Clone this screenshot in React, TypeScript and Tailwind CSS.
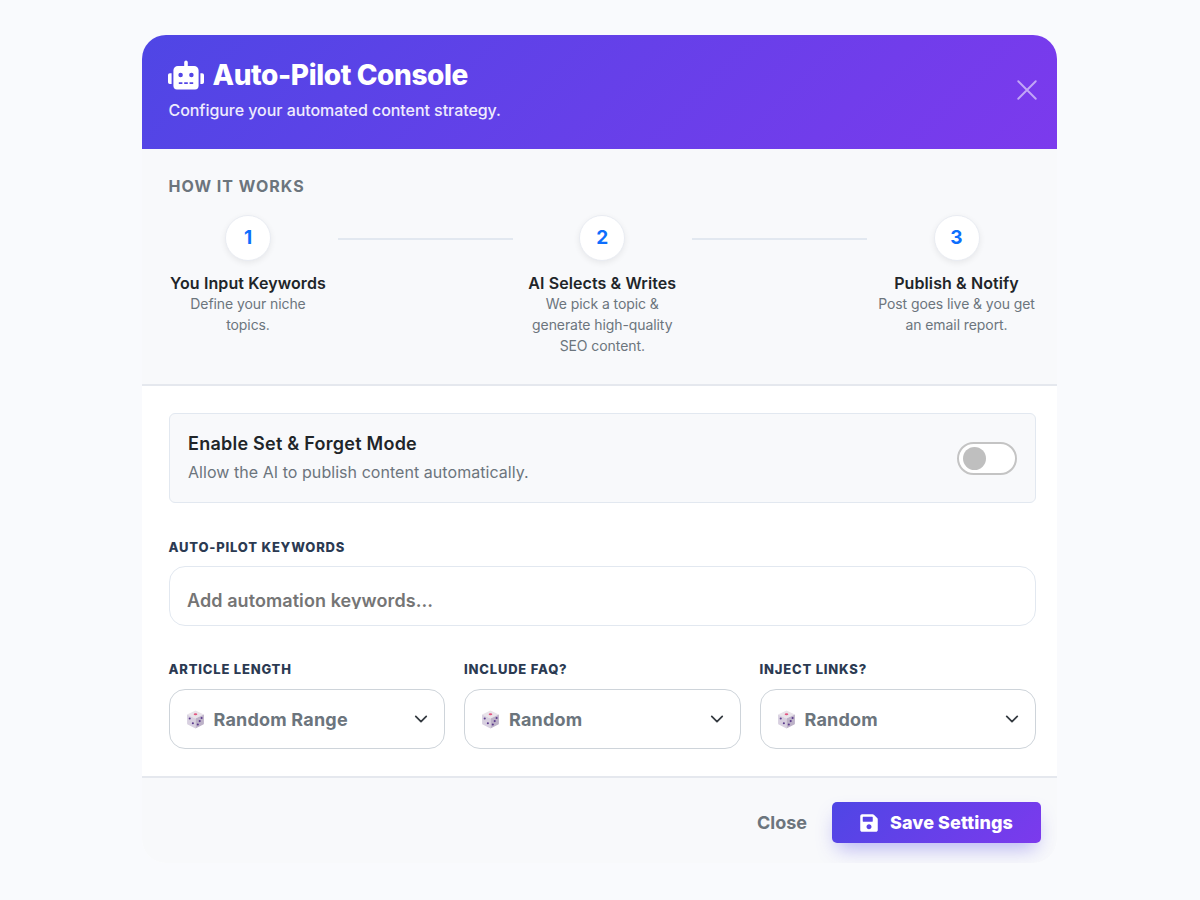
import { FaRobot, FaSave } from 'react-icons/fa';

const steps = [
  { n: '1', title: 'You Input Keywords', lines: ['Define your niche', 'topics.'] },
  { n: '2', title: 'AI Selects & Writes', lines: ['We pick a topic &', 'generate high-quality', 'SEO content.'] },
  { n: '3', title: 'Publish & Notify', lines: ['Post goes live & you get', 'an email report.'] },
];

const selects = [
  { label: 'ARTICLE LENGTH', value: 'Random Range' },
  { label: 'INCLUDE FAQ?', value: 'Random' },
  { label: 'INJECT LINKS?', value: 'Random' },
];

const Dice = () => (
  <svg width="21" height="21" viewBox="0 0 20 20" className="shrink-0">
    <path d="M10 1.5 18 5.2 10 9 2 5.2Z" fill="#e9e4ea" />
    <path d="M2 5.2 10 9v9.5L2.6 14.8Q2 14.500 2 13.800Z" fill="#d8d0e0" />
    <path d="M18 5.2 10 9v9.5l7.400-3.700q.6-.3.6-1Z" fill="#bdb2c8" />
    <ellipse cx="10" cy="5" rx="1.700" ry="1" fill="#e2557f" />
    <circle cx="4.500" cy="9" r="1" fill="#5b3a8c" />
    <circle cx="7.500" cy="13.500" r="1" fill="#5b3a8c" />
    <circle cx="15.800" cy="8.500" r="1" fill="#5b3a8c" />
    <circle cx="14" cy="11.500" r="1" fill="#5b3a8c" />
    <circle cx="12.200" cy="14.800" r="1" fill="#5b3a8c" />
  </svg>
);

const Chevron = () => (
  <svg width="14" height="14" viewBox="0 0 16 16" fill="none" stroke="#343a40" strokeWidth="2" strokeLinecap="round" strokeLinejoin="round" className="shrink-0">
    <path d="m2 5 6 6 6-6" />
  </svg>
);

const App = () => {
  return (
    <div className="min-h-[900px] bg-[#f9fafd] pt-[35px] font-['Inter',sans-serif]">
      <div className="ml-[142px] w-[915px] overflow-hidden rounded-[24px] bg-white">
        <div className="flex h-[114px] items-center justify-between bg-[linear-gradient(135deg,#4f46e5,#7c3aed)] pr-[20px] pl-[26.5px]">
          <div className="-mt-[5px]">
            <h1 className="flex items-center gap-[9px] text-[28px] leading-[34px] font-extrabold tracking-[-0.4px] text-white">
              <FaRobot size={36} className="-ml-px w-[36px]" />
              Auto-Pilot Console
            </h1>
            <p className="mt-[5px] text-[16px] leading-[24px] font-medium tracking-[-0.05px] text-white/90">Configure your automated content strategy.</p>
          </div>
          <svg width="20" height="20" viewBox="0 0 16 16" fill="none" stroke="#ffffff" strokeOpacity="0.55" strokeWidth="1.500" strokeLinecap="round" className="-mt-[4px]">
            <path d="M1 1l14 14M15 1 1 15" />
          </svg>
        </div>

        <div className="h-[237px] border-b-2 border-[#e5e8ee] bg-[#f8f9fb] pt-[27px] pr-[21px] pl-[26.5px]">
          <h2 className="text-[16px] leading-[20px] font-bold tracking-[1px] text-[#6c757d]">HOW IT WORKS</h2>
          <div className="mt-[19px] flex items-start justify-between">
            {steps.map((s, i) => (
              <div key={s.n} className="contents">
                {i > 0 && <div className="mt-[23px] h-[2px] w-[175px] bg-[#e2e8f0]" />}
                <div className="flex w-[159px] flex-col items-center text-center">
                  <div className="flex h-[46px] w-[46px] items-center justify-center rounded-full border border-[#e9ecf2] bg-white text-[19px] font-bold text-[#0d6efd] shadow-[0_2px_6px_rgba(0,0,0,0.07)]">
                    {s.n}
                  </div>
                  <div className="mt-[10px] text-[16px] leading-[24px] font-semibold tracking-[0.1px] whitespace-nowrap text-[#212529]">{s.title}</div>
                  <div className="-mt-[2px] text-[14px] leading-[21px] tracking-[-0.08px] whitespace-nowrap text-[#6c757d]">
                    {s.lines.map((l) => (
                      <div key={l}>{l}</div>
                    ))}
                  </div>
                </div>
              </div>
            ))}
          </div>
        </div>

        <div className="h-[392px] border-b-2 border-[#e5e8ee] pt-[27px] pr-[21px] pl-[26.5px]">
          <div className="flex h-[90px] items-center justify-between rounded-[6px] border border-[#e2e8f0] bg-[#f8f9fb] pr-[18px] pl-[18.5px]">
            <div>
              <div className="-mt-[2px] text-[18px] leading-[27px] font-semibold tracking-[0.25px] text-[#212529]">Enable Set &amp; Forget Mode</div>
              <div className="mt-[3px] text-[16px] leading-[24px] tracking-[0.05px] text-[#6c757d]">Allow the AI to publish content automatically.</div>
            </div>
            <div className="flex h-[33px] w-[60px] items-center rounded-full border-2 border-[#c4c4c4] bg-white pl-[4px]">
              <div className="h-[23px] w-[23px] rounded-full bg-[#bfbfbf]" />
            </div>
          </div>

          <label className="mt-[35px] block text-[13px] leading-[18px] font-extrabold tracking-[0.8px] text-[#2b3a52]">AUTO-PILOT KEYWORDS</label>
          <div className="mt-[10px] h-[60px] overflow-hidden rounded-[16px] border border-[#e2e8f0] bg-white pt-[22px] pl-[17.5px] text-[18px] leading-[24px] font-semibold tracking-[0.08px] text-[#757575]">
            <div className="h-[20px] overflow-hidden">Add automation keywords...</div>
          </div>

          <div className="mt-[34px] grid grid-cols-3 gap-[19px]">
            {selects.map((s) => (
              <div key={s.label}>
                <div className="text-[13px] leading-[18px] font-extrabold tracking-[0.8px] text-[#2b3a52]">{s.label}</div>
                <div className="mt-[11px] flex h-[60px] items-center justify-between rounded-[16px] border border-[#ced4da] bg-white pr-[16px] pl-[15px]">
                  <div className="flex items-center gap-[8px] text-[18px] font-bold tracking-[0.2px] text-[#6c757d]">
                    <Dice />
                    {s.value}
                  </div>
                  <Chevron />
                </div>
              </div>
            ))}
          </div>
        </div>

        <div className="flex h-[85px] items-center justify-end gap-[25px] bg-[#f8f9fb] pt-[4px] pr-[16px]">
          <span className="text-[18px] font-bold text-[#6c757d]">Close</span>
          <div className="flex h-[41px] w-[209px] items-center justify-center gap-[12px] rounded-[5px] bg-[linear-gradient(135deg,#4f46e5,#7c3aed)] text-[18px] font-extrabold tracking-[0.1px] text-white shadow-[0_10px_20px_-5px_rgba(79,70,229,0.4)]">
            <FaSave size={20} className="w-[18px]" />
            Save Settings
          </div>
        </div>
      </div>
    </div>
  );
};

export default App;
